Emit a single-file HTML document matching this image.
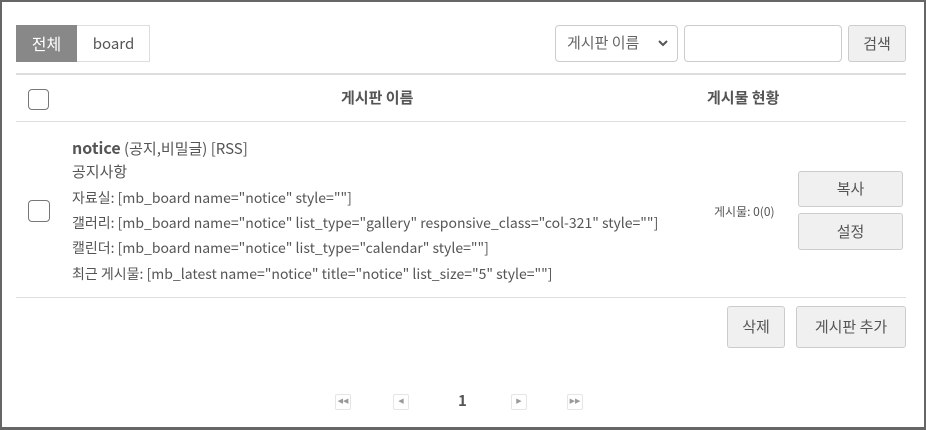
<!DOCTYPE html>
<html><head><meta charset="utf-8"><style>
*{box-sizing:border-box;margin:0;padding:0}
body{width:926px;height:430px;background:#fff;font-family:"Noto Sans CJK KR","Liberation Sans",sans-serif;color:#444;position:relative;overflow:hidden;line-height:1.2}
.frame{position:absolute;left:0;top:0;width:926px;height:430px;border:2px solid #666;border-bottom-width:3px}
.abs{position:absolute}
.btn{position:absolute;background:#f0f0f0;border:1px solid #ccc;border-radius:3px;font-size:15px;color:#555;display:flex;align-items:center;justify-content:center}
.cb{position:absolute;width:21px;height:21px;border:1px solid #777;border-radius:4px;background:#fff}
.pg{position:absolute;top:394px;width:16px;height:16px;border:1px solid #e5e5e5;border-radius:2px;font-size:7px;color:#999;display:flex;align-items:center;justify-content:center;font-family:"Liberation Sans",sans-serif}
.line{position:absolute;left:72px;font-size:14px;color:#555;white-space:nowrap}
</style></head><body>
<div class="frame"></div>
<div class="abs" style="left:16px;top:25px;width:134px;height:37px;border:1px solid #ddd"></div>
<div class="abs" style="left:16px;top:25px;width:61px;height:37px;background:#888;color:#fff;font-size:16px;display:flex;align-items:center;justify-content:center">전체</div>
<div class="abs" style="left:77px;top:25px;width:73px;height:37px;font-size:15px;color:#555;display:flex;align-items:center;justify-content:center">board</div>
<div class="abs" style="left:555px;top:25px;width:123px;height:37px;border:1px solid #ccc;border-radius:4px;font-size:15px;color:#666;padding:8px 0 0 11px">게시판 이름</div>
<svg class="abs" style="left:658px;top:40px" width="10" height="7"><path d="M1 1l4 4 4-4" stroke="#555" stroke-width="2" fill="none"/></svg>
<div class="abs" style="left:684px;top:25px;width:158px;height:37px;border:1px solid #ccc;border-radius:4px"></div>
<div class="btn" style="left:848px;top:25px;width:58px;height:37px">검색</div>
<div class="abs" style="left:16px;top:73px;width:890px;height:2px;background:#ddd"></div>
<div class="cb" style="left:28px;top:89px"></div>
<div class="abs" style="left:341px;top:89px;font-size:15px;font-weight:bold;color:#555">게시판 이름</div>
<div class="abs" style="left:707px;top:89px;font-size:15px;font-weight:bold;color:#555">게시물 현황</div>
<div class="abs" style="left:16px;top:121px;width:890px;height:1px;background:#ddd"></div>
<div class="line" style="top:138px;font-size:15px"><b style="color:#555;font-size:16px">notice</b> (공지,비밀글) [RSS]</div>
<div class="line" style="top:163px;font-size:15px">공지사항</div>
<div class="line" style="top:190px">자료실: [mb_board name="notice" style=""]</div>
<div class="line" style="top:215px">갤러리: [mb_board name="notice" list_type="gallery" responsive_class="col-321" style=""]</div>
<div class="line" style="top:240px">캘린더: [mb_board name="notice" list_type="calendar" style=""]</div>
<div class="line" style="top:266px">최근 게시물: [mb_latest name="notice" title="notice" list_size="5" style=""]</div>
<div class="cb" style="left:28px;top:200px;width:22px;height:22px"></div>
<div class="abs" style="left:714px;top:205px;font-size:12px;color:#555">게시물: 0(0)</div>
<div class="btn" style="left:798px;top:171px;width:105px;height:36px">복사</div>
<div class="btn" style="left:798px;top:213px;width:105px;height:37px">설정</div>
<div class="abs" style="left:16px;top:297px;width:890px;height:1px;background:#ddd"></div>
<div class="btn" style="left:727px;top:306px;width:58px;height:42px">삭제</div>
<div class="btn" style="left:796px;top:306px;width:110px;height:42px">게시판 추가</div>
<div class="pg" style="left:335px">◀◀</div>
<div class="pg" style="left:393px">◀</div>
<div class="abs" style="left:458px;top:392px;font-size:15px;font-weight:bold;color:#555">1</div>
<div class="pg" style="left:511px">▶</div>
<div class="pg" style="left:567px">▶▶</div>
</body></html>
